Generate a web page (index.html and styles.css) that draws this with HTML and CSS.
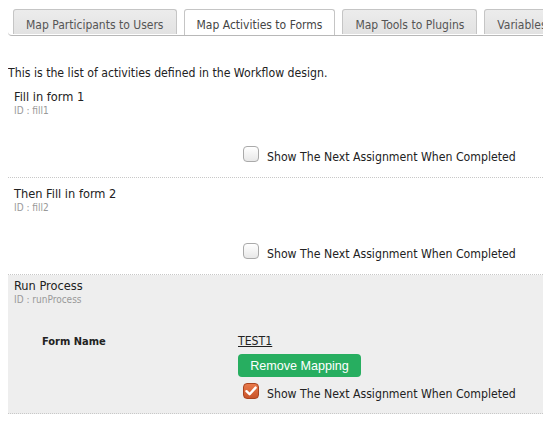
FILE: index.html
```html
<!DOCTYPE html>
<html>
<head>
<meta charset="utf-8">
<link rel="stylesheet" href="styles.css">
</head>
<body>
<div class="tabs">
  <div class="tab">Map Participants to Users</div>
  <div class="tab active">Map Activities to Forms</div>
  <div class="tab">Map Tools to Plugins</div>
  <div class="tab">Variables</div>
</div>
<p class="intro">This is the list of activities defined in the Workflow design.</p>
<div class="row first">
  <div class="title">Fill in form 1</div>
  <div class="id">ID : fill1</div>
  <div class="field">
    <div></div>
    <label class="check"><span class="cb"></span>Show The Next Assignment When Completed</label>
  </div>
</div>
<div class="row">
  <div class="title">Then Fill in form 2</div>
  <div class="id">ID : fill2</div>
  <div class="field">
    <div></div>
    <label class="check"><span class="cb"></span>Show The Next Assignment When Completed</label>
  </div>
</div>
<div class="row hl">
  <div class="title">Run Process</div>
  <div class="id">ID : runProcess</div>
  <div class="field mapped">
    <div class="fname">Form Name</div>
    <div class="val">
      <a class="link">TEST1</a>
      <button class="btn">Remove Mapping</button>
      <label class="check"><span class="cb on"><svg width="12" height="10" viewBox="0 0 12 10"><path d="M1.5 5.2 L4.6 8.2 L10.6 1.6" fill="none" stroke="#fff" stroke-width="2.4" stroke-linecap="round" stroke-linejoin="round"/></svg></span>Show The Next Assignment When Completed</label>
    </div>
  </div>
</div>
</body>
</html>
```
FILE: styles.css
```css
html { overflow-x: hidden; }
body {
  margin: 8px 0 0 8px;
  font-family: "DejaVu Sans Condensed", "DejaVu Sans", sans-serif;
  font-size: 12.2px;
  color: #222;
  background: #fff;
}
.tabs {
  display: flex;
  gap: 7px;
  padding: 1px 0 0 5px;
  border-bottom: 1px solid #b8b8b8;
  border-bottom-left-radius: 4px;
  white-space: nowrap;
  height: 26px;
}
.tab {
  flex: none;
  height: 25px;
  line-height: 22px;
  padding: 4px 12px 0;
  box-sizing: border-box;
  border: 1px solid #c5c5c5;
  border-bottom: none;
  border-radius: 3px 3px 0 0;
  background: linear-gradient(#ececec, #e2e2e2);
  color: #555;
  font-size: 12px;
}
.tab.active {
  background: #fff;
  height: 26px;
  color: #454545;
}
.intro {
  margin: 30px 0 0 0;
  line-height: 14px;
}
.row {
  padding: 8px 6px 10px 6px;
  border-bottom: 1px dotted #c8c8c8;
}
.row.first { padding-top: 9px; }
.row.hl { background: #eee; padding-top: 3px; padding-bottom: 9px; }
.title { line-height: 16px; font-size: 12.7px; }
.id { font-size: 10px; line-height: 12px; color: #999; }
.field {
  display: grid;
  grid-template-columns: 224px 1fr;
  margin-top: 30px;
}
.check {
  display: flex;
  align-items: center;
  height: 20px;
  padding-left: 5px;
}
.cb {
  box-sizing: border-box;
  width: 16px;
  height: 16px;
  border: 1px solid #aaa;
  border-radius: 4px;
  background: linear-gradient(#fff, #e8e8e8);
  margin-right: 8px;
  margin-top: -6px;
  display: flex;
  align-items: center;
  justify-content: center;
}
.cb.on {
  border-color: #a94420;
  background: linear-gradient(#e8794a, #c9552b);
  margin-top: -7px;
}
.mapped { margin-top: 28px; }
.fname { font-weight: bold; font-size: 11px; padding-left: 28px; line-height: 15px; }
.val { display: flex; flex-direction: column; align-items: flex-start; }
.link {
  color: #222;
  text-decoration: underline;
  line-height: 15px;
}
.btn {
  margin-top: 5px;
  width: 123px;
  height: 23px;
  border: none;
  border-radius: 4px;
  background: #27ae60;
  color: #fff;
  font-family: "Liberation Sans", Arial, sans-serif;
  font-size: 12.6px;
  padding: 0;
}
.val .check { margin-top: 7px; }
```
